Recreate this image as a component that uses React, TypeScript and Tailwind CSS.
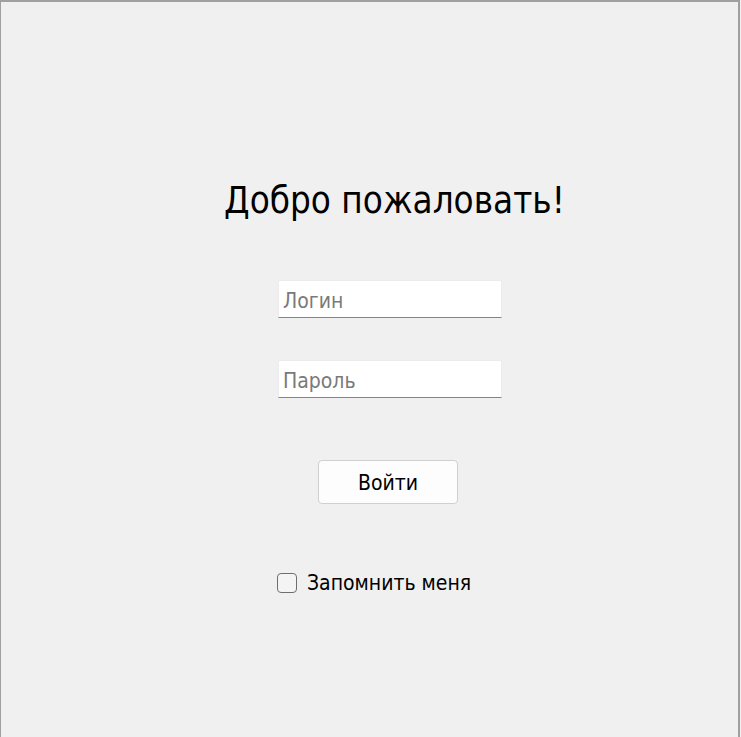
import React from "react";

export default function App() {
  const font = { fontFamily: '"DejaVu Sans Condensed", "DejaVu Sans", sans-serif' };
  return (
    <div className="w-[741px] h-[737px] bg-[#f0f0f0] overflow-hidden" style={font}>
      <div className="w-[740px] h-[737px] border-l border-t-2 border-r-2 border-[#a0a0a0] bg-[#f0f0f0] flex flex-col">
        <div className="ml-[223px] mt-[177px] text-[36.5px] leading-[44px] text-black whitespace-nowrap">
          Добро пожаловать!
        </div>
        <input
          className="ml-[277px] mt-[57px] w-[224px] h-[38px] bg-white border border-[#ececec] border-b-[#848484] pl-[4px] pt-[3px] text-[21px] text-black outline-none placeholder:text-[#7a7a7a]"
          placeholder="Логин"
          style={font}
        />
        <input
          type="password"
          className="ml-[277px] mt-[42px] w-[224px] h-[38px] bg-white border border-[#ececec] border-b-[#848484] pl-[4px] pt-[3px] text-[21px] text-black outline-none placeholder:text-[#7a7a7a]"
          placeholder="Пароль"
          style={font}
        />
        <button
          className="ml-[317px] mt-[62px] w-[140px] h-[44px] bg-[#fdfdfd] border border-[#d0d0d0] rounded-[4px] pt-[3px] text-[21px] text-black"
          style={font}
        >
          Войти
        </button>
        <label className="ml-[276px] mt-[65px] flex items-center gap-[10px] text-[21px] text-black">
          <span className="w-[20px] h-[20px] rounded-[4px] border border-[#6e6e6e] bg-[#f4f4f4]" />
          <span className="leading-[28px]">Запомнить меня</span>
        </label>
      </div>
    </div>
  );
}
